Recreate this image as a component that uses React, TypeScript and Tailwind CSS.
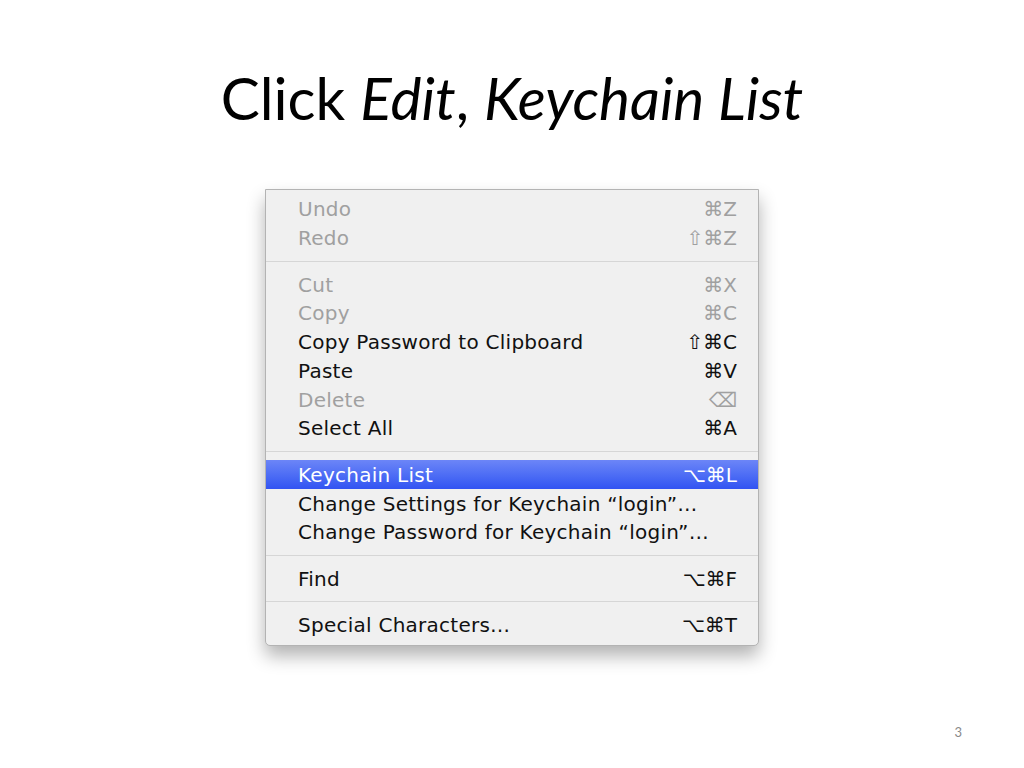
import React from "react";

type Item = {
  label: string;
  keys: string;
  disabled?: boolean;
  active?: boolean;
};

const groups: Item[][] = [
  [
    { label: "Undo", keys: "⌘Z", disabled: true },
    { label: "Redo", keys: "⇧⌘Z", disabled: true },
  ],
  [
    { label: "Cut", keys: "⌘X", disabled: true },
    { label: "Copy", keys: "⌘C", disabled: true },
    { label: "Copy Password to Clipboard", keys: "⇧⌘C" },
    { label: "Paste", keys: "⌘V" },
    { label: "Delete", keys: "⌫", disabled: true },
    { label: "Select All", keys: "⌘A" },
  ],
  [
    { label: "Keychain List", keys: "⌥⌘L", active: true },
    { label: "Change Settings for Keychain \u201clogin\u201d\u2026", keys: "" },
    { label: "Change Password for Keychain \u201clogin\u201d\u2026", keys: "" },
  ],
  [{ label: "Find", keys: "⌥⌘F" }],
  [{ label: "Special Characters\u2026", keys: "⌥⌘T" }],
];

const MenuRow = ({ item }: { item: Item }) => {
  const color = item.active
    ? "text-white bg-gradient-to-b from-[#6c85f7] to-[#3253f2]"
    : item.disabled
    ? "text-[#a0a0a0]"
    : "text-[#111111]";
  return (
    <div
      className={`flex h-[28.8px] items-center justify-between pl-[32px] pr-[21px] ${color}`}
    >
      <span className="tracking-[0.25px]">{item.label}</span>
      <span>{item.keys}</span>
    </div>
  );
};

const App = () => {
  return (
    <div className="flex h-[768px] w-[1024px] flex-col items-center bg-white">
      <h1 className="mt-[59px] font-['Lato',sans-serif] text-[58.5px] leading-[76px] text-black">
        Click <i>Edit</i>, <i>Keychain List</i>
      </h1>

      <div className="mt-[54px] w-[494px] rounded-b-[5px] border border-[#b3b3b3] bg-[#f0f0f0] pt-[5px] pb-[6px] font-['DejaVu_Sans',sans-serif] text-[20px] shadow-[0_10px_18px_rgba(0,0,0,0.3)]">
        {groups.map((group, gi) => (
          <div key={gi}>
            {gi > 0 && (
              <div className="flex h-[17.5px] items-center">
                <div className="h-px w-full bg-[#d6d6d6]" />
              </div>
            )}
            {group.map((item) => (
              <MenuRow key={item.label} item={item} />
            ))}
          </div>
        ))}
      </div>

      <div className="mt-auto mb-[26px] flex w-full justify-end pr-[62px] font-['Lato',sans-serif] text-[13px] text-[#8a8a8a]">
        3
      </div>
    </div>
  );
};

export default App;
